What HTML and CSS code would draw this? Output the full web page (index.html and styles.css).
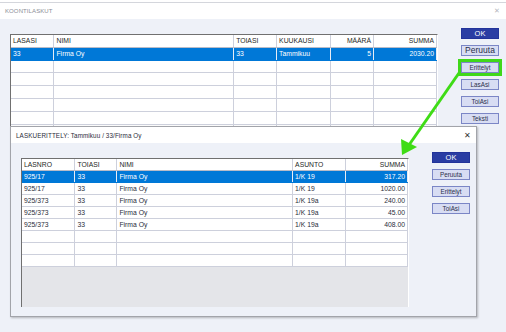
FILE: index.html
```html
<!DOCTYPE html>
<html lang="fi">
<head>
  <meta charset="UTF-8" />
  <title>Koontilaskut</title>
  <link rel="stylesheet" href="styles.css">
</head>
<body>
  <div class="topstrip"></div>

  <div class="window">
    <div class="titlebar">
      <span class="title">KOONTILASKUT</span>
      <span class="close light">✕</span>
    </div>
    <div class="win-body">
      <div class="grid main-grid">
        <table>
          <colgroup>
            <col style="width:43px"><col style="width:180px"><col style="width:43px">
            <col style="width:54px"><col style="width:43px"><col style="width:63px">
          </colgroup>
          <tr class="head">
            <td>LASASI</td><td>NIMI</td><td>TOIASI</td><td>KUUKAUSI</td><td class="num">MÄÄRÄ</td><td class="num">SUMMA</td>
          </tr>
          <tr class="sel">
            <td>33</td><td>Firma Oy</td><td>33</td><td>Tammikuu</td><td class="num">5</td><td class="num">2030.20</td>
          </tr>
          <tr><td></td><td></td><td></td><td></td><td></td><td></td></tr>
          <tr><td></td><td></td><td></td><td></td><td></td><td></td></tr>
          <tr><td></td><td></td><td></td><td></td><td></td><td></td></tr>
          <tr><td></td><td></td><td></td><td></td><td></td><td></td></tr>
          <tr><td></td><td></td><td></td><td></td><td></td><td></td></tr>
          <tr><td></td><td></td><td></td><td></td><td></td><td></td></tr>
        </table>
      </div>
      <div class="buttons">
        <button class="btn ok">OK</button>
        <button class="btn big">Peruuta</button>
        <button class="btn highlight">Erittelyt</button>
        <button class="btn">LasAsi</button>
        <button class="btn">ToiAsi</button>
        <button class="btn">Teksti</button>
      </div>
    </div>
  </div>

  <div class="dialog">
    <div class="titlebar dlg-title">
      <span class="title dark">LASKUERITTELY: Tammikuu / 33/Firma Oy</span>
      <span class="close">✕</span>
    </div>
    <div class="win-body dlg-body">
      <div class="grid dlg-grid">
        <table>
          <colgroup>
            <col style="width:53px"><col style="width:42px"><col style="width:176px">
            <col style="width:53px"><col style="width:62px">
          </colgroup>
          <tr class="head">
            <td>LASNRO</td><td>TOIASI</td><td>NIMI</td><td>ASUNTO</td><td class="num">SUMMA</td>
          </tr>
          <tr class="sel">
            <td>925/17</td><td>33</td><td>Firma Oy</td><td>1/K 19</td><td class="num">317.20</td>
          </tr>
          <tr><td>925/17</td><td>33</td><td>Firma Oy</td><td>1/K 19</td><td class="num">1020.00</td></tr>
          <tr><td>925/373</td><td>33</td><td>Firma Oy</td><td>1/K 19a</td><td class="num">240.00</td></tr>
          <tr><td>925/373</td><td>33</td><td>Firma Oy</td><td>1/K 19a</td><td class="num">45.00</td></tr>
          <tr><td>925/373</td><td>33</td><td>Firma Oy</td><td>1/K 19a</td><td class="num">408.00</td></tr>
          <tr><td></td><td></td><td></td><td></td><td></td></tr>
          <tr><td></td><td></td><td></td><td></td><td></td></tr>
          <tr><td></td><td></td><td></td><td></td><td></td></tr>
        </table>
      </div>
      <div class="buttons">
        <button class="btn ok">OK</button>
        <button class="btn">Peruuta</button>
        <button class="btn">Erittelyt</button>
        <button class="btn">ToiAsi</button>
      </div>
    </div>
  </div>

  <svg class="arrow" width="506" height="332" viewBox="0 0 506 332">
    <line x1="459" y1="73" x2="409" y2="145" stroke="#3fdc16" stroke-width="3"/>
    <polygon points="402,155 401,139 417,147" fill="#3fdc16"/>
  </svg>
</body>
</html>
```

FILE: styles.css
```css
body {
  margin: 0;
  width: 506px;
  height: 332px;
  overflow: hidden;
  position: relative;
  background: #eef1f8;
  font-family: "Liberation Sans", Arial, sans-serif;
  color: #2a2d3a;
}

.topstrip {
  height: 2px;
  background: #fff;
  border-bottom: 1px solid #d4d6dc;
}

.titlebar {
  height: 16px;
  background: #fff;
  display: flex;
  align-items: center;
  justify-content: space-between;
  padding: 0 5px;
}

.title {
  font-size: 6px;
  color: #8a8d96;
  letter-spacing: 0.1px;
}

.title.dark {
  font-size: 6.3px;
  color: #2a2d3a;
}

.close {
  font-size: 8px;
  color: #333;
}

.close.light {
  color: #b5b7bd;
  font-size: 7px;
  margin-right: 1px;
}

.win-body {
  display: flex;
  gap: 23px;
  padding: 9px 0 0 10px;
}

.grid {
  margin-top: 6px;
  background: #e4e5e9;
  border-top: 1px solid #707070;
  border-left: 1px solid #707070;
  border-right: 1px solid #fff;
  overflow: hidden;
}

.main-grid {
  width: 426px;
  height: 200px;
}

table {
  border-collapse: collapse;
  table-layout: fixed;
  font-size: 6.8px;
}

td {
  height: 11.4px;
  padding: 0 2px;
  background: #fff;
  border-right: 1px solid #cdd0dc;
  border-bottom: 1px solid #cdd0dc;
  white-space: nowrap;
  overflow: hidden;
}

.main-grid td {
  height: 11.8px;
}

.head td {
  color: #1e1f26;
  border-bottom-color: #b9bcc8;
}

.num {
  text-align: right;
}

.sel td {
  background: #0078d7;
  color: #fff;
  border-right-color: #e8ecf5;
  border-bottom-color: #0078d7;
}

.buttons {
  display: flex;
  flex-direction: column;
  gap: 6px;
}

.btn {
  width: 38px;
  height: 11px;
  padding: 0;
  font-family: inherit;
  font-size: 6.3px;
  color: #2a2f4a;
  background: #d8ddf3;
  border: 1px solid #7b86c6;
  line-height: 9px;
}

.btn.ok {
  background: #2a3da3;
  border-color: #22339a;
  color: #fff;
  font-size: 7.5px;
}

.btn.big {
  font-size: 8.5px;
}

.btn.highlight {
  box-shadow: 0 0 0 3px #3fd81a;
}

.dialog {
  position: absolute;
  left: 10px;
  top: 126px;
  width: 465px;
  height: 189px;
  border: 1px solid #a2a4aa;
  box-shadow: 1px 1px 2px rgba(0, 0, 0, 0.25);
  background: #eef1f8;
}

.dlg-title {
  height: 16px;
}

.dlg-body {
  padding-left: 10px;
}

.dlg-grid {
  width: 386px;
  height: 148px;
}

.dlg-grid td {
  height: 11px;
}

.arrow {
  position: absolute;
  left: 0;
  top: 0;
}
```
